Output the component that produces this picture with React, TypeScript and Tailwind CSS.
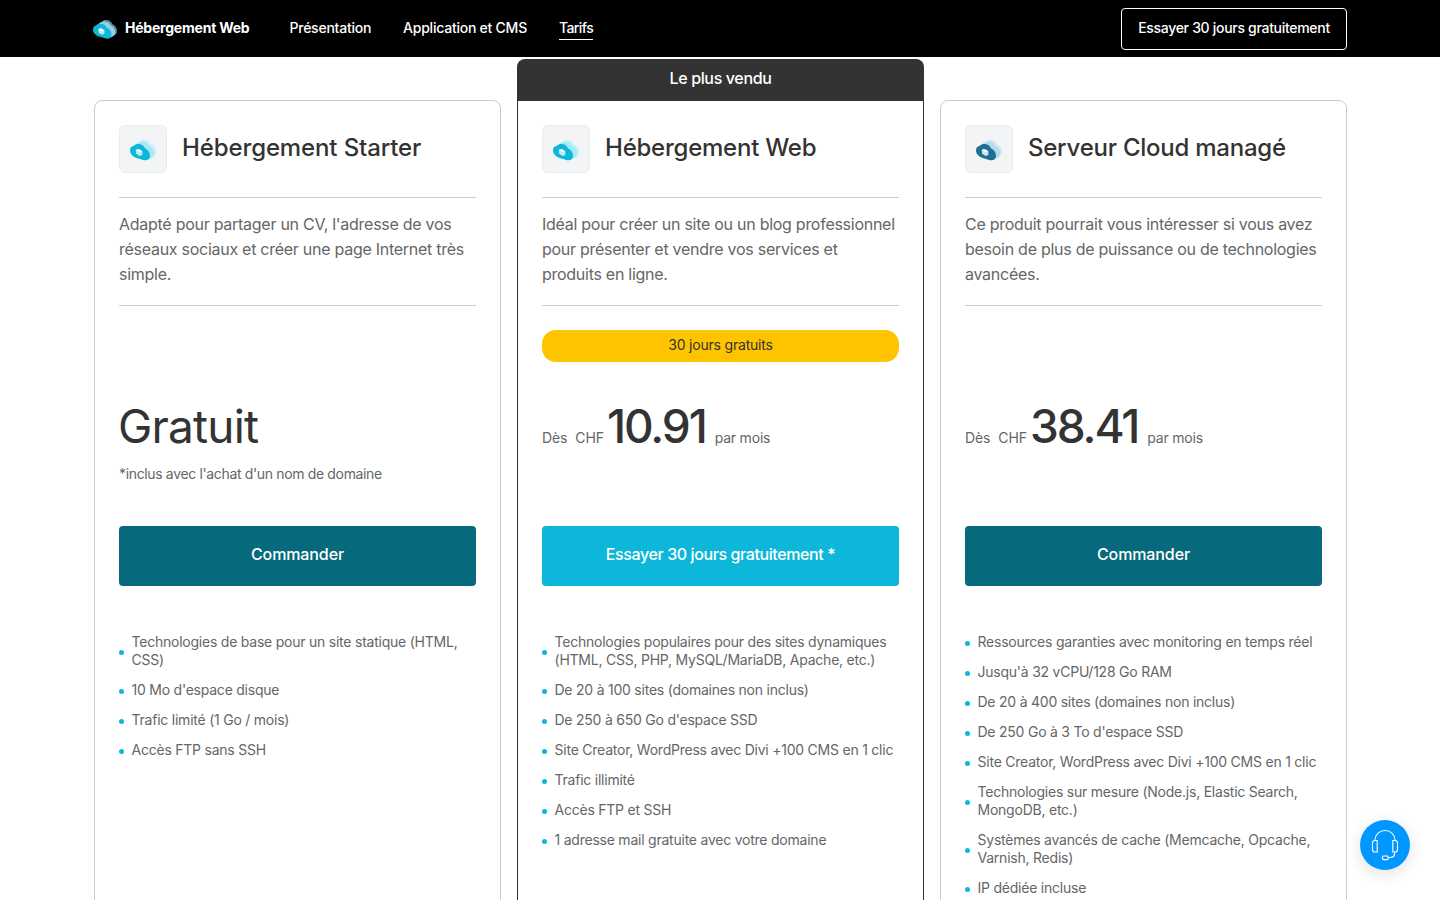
import React from 'react';
import clsx from 'clsx';

type CloudTone = 'cyan' | 'navy' | 'header';

type Plan = {
  name: string;
  nameClass: string;
  tone: CloudTone;
  description: string[];
  featured?: boolean;
  badge?: string;
  price?: string;
  note?: string;
  cta: string;
  features: string[][];
};

const CLOUD_COLORS: Record<CloudTone, [string, string, string]> = {
  cyan: ['#c5f1f9', '#a2ebf7', '#0db7d9'],
  navy: ['#cde8f3', '#b2dbed', '#1f6f91'],
  header: ['#5d8d98', '#8fd3e3', '#0fb8d9'],
};

const plans: Plan[] = [
  {
    name: 'Hébergement Starter',
    nameClass: 'tracking-[-0.12px]',
    tone: 'cyan',
    description: ["Adapté pour partager un CV, l'adresse de vos", 'réseaux sociaux et créer une page Internet très', 'simple.'],
    note: "*inclus avec l'achat d'un nom de domaine",
    cta: 'Commander',
    features: [
      ['Technologies de base pour un site statique (HTML,', 'CSS)'],
      ["10 Mo d'espace disque"],
      ['Trafic limité (1 Go / mois)'],
      ['Accès FTP sans SSH'],
    ],
  },
  {
    name: 'Hébergement Web',
    nameClass: 'tracking-[-0.24px]',
    tone: 'cyan',
    description: ['Idéal pour créer un site ou un blog professionnel', 'pour présenter et vendre vos services et', 'produits en ligne.'],
    featured: true,
    badge: '30 jours gratuits',
    price: '10.91',
    cta: 'Essayer 30 jours gratuitement *',
    features: [
      ['Technologies populaires pour des sites dynamiques', '(HTML, CSS, PHP, MySQL/MariaDB, Apache, etc.)'],
      ['De 20 à 100 sites (domaines non inclus)'],
      ["De 250 à 650 Go d'espace SSD"],
      ['Site Creator, WordPress avec Divi +100 CMS en 1 clic'],
      ['Trafic illimité'],
      ['Accès FTP et SSH'],
      ['1 adresse mail gratuite avec votre domaine'],
    ],
  },
  {
    name: 'Serveur Cloud managé',
    nameClass: 'tracking-[-0.24px]',
    tone: 'navy',
    description: ['Ce produit pourrait vous intéresser si vous avez', 'besoin de plus de puissance ou de technologies', 'avancées.'],
    price: '38.41',
    cta: 'Commander',
    features: [
      ['Ressources garanties avec monitoring en temps réel'],
      ["Jusqu'à 32 vCPU/128 Go RAM"],
      ['De 20 à 400 sites (domaines non inclus)'],
      ["De 250 Go à 3 To d'espace SSD"],
      ['Site Creator, WordPress avec Divi +100 CMS en 1 clic'],
      ['Technologies sur mesure (Node.js, Elastic Search,', 'MongoDB, etc.)'],
      ['Systèmes avancés de cache (Memcache, Opcache,', 'Varnish, Redis)'],
      ['IP dédiée incluse'],
    ],
  },
];

const CLOUD = 'M0 10.2C0 7.6 1.8 5.9 4 5.7C5.4 4.4 7 3.9 9.1 4.1C11.9 4.4 13.9 5.8 14.8 8.2C17.8 9.4 20 12.6 20 15.8C20 18.4 18.6 20.2 16 20.2C13.6 20.2 11 19.2 8.4 18.4C3.4 17.2 0 14.4 0 10.2Z';

const CloudIcon: React.FC<{ tone: CloudTone; className: string }> = ({ tone, className }) => {
  const [back, middle, front] = CLOUD_COLORS[tone];
  return (
    <svg viewBox="0 0 26 21" className={className} fill="none">
      <path d={CLOUD} fill={back} transform="translate(6 -4)" />
      <path d={CLOUD} fill={middle} transform="translate(4.2 -2.4)" />
      <path d={CLOUD} fill={middle} transform="translate(2.2 -1.2)" />
      <path d={CLOUD} fill={front} />
      <path d="M5.8 9.4L8.8 8.9L12.4 11.2V15L9.4 16L6 13.6Z" fill="#bdebf4" />
      <path d="M6 10L8.8 9.2L12.2 11.3L9.5 12.2Z" fill="white" />
    </svg>
  );
};

const Header: React.FC = () => (
  <header className="h-[57px] bg-black text-white text-sm font-medium pl-[93px] pr-[93px] flex items-center">
    <div className="flex items-center gap-2">
      <CloudIcon tone="header" className="w-6 h-[19.4px] mt-0.5" />
      <span className="font-bold tracking-[-0.22px]">Hébergement Web</span>
    </div>
    <nav className="flex items-center gap-8 ml-10 pb-0.5 tracking-[-0.24px]">
      <a>Présentation</a>
      <a>Application et CMS</a>
      <a className="h-[22px] mt-0.5 border-b border-white tracking-[-0.6px]">Tarifs</a>
    </nav>
    <button className="ml-auto w-[226px] h-[42px] pb-0.5 border border-white rounded tracking-[-0.3px]">
      Essayer 30 jours gratuitement
    </button>
  </header>
);

const PlanCard: React.FC<{ plan: Plan }> = ({ plan }) => (
  <div className={clsx('w-[407px]', !plan.featured && 'pt-[41px]')}>
    {plan.featured && (
      <div className="h-[41px] pb-[3px] rounded-t-lg bg-[#333] text-white font-medium tracking-[-0.35px] flex items-center justify-center">
        Le plus vendu
      </div>
    )}
    <section className={clsx('h-[900px] border px-6 pt-6', plan.featured ? 'border-[#333]' : 'border-[#ccc] rounded-lg')}>
      <div className="flex items-center gap-[15px]">
        <div className="w-12 h-12 rounded-md border border-[#e8ebef] bg-[#f2f4f6] flex items-center justify-center">
          <CloudIcon tone={plan.tone} className="w-[26px] h-[21px] mt-0.5" />
        </div>
        <h2 className={clsx('text-2xl font-medium text-[#333] -mt-0.5', plan.nameClass)}>{plan.name}</h2>
      </div>

      <div className="mt-6 h-[109px] border-y border-[#ccc] pt-3.5 text-base leading-[25px] text-[#666] tracking-[-0.27px]">
        {plan.description.map(line => (
          <p key={line} className="whitespace-nowrap">{line}</p>
        ))}
      </div>

      <div className="h-[56px] pt-6">
        {plan.badge && (
          <div className="h-8 rounded-[14px] bg-[#ffc400] text-sm text-[#333] tracking-[-0.2px] flex items-center justify-center pb-0.5">{plan.badge}</div>
        )}
      </div>

      <div className="h-[164px] pt-[34px] text-sm text-[#666] tracking-[-0.1px]">
        {plan.price ? (
          <div className="flex items-baseline whitespace-nowrap">
            <span>Dès</span>
            <span className="ml-2">CHF</span>
            <span className="ml-[3px] text-[46px] leading-[60px] font-medium text-[#333] tracking-[-2.1px]">{plan.price}</span>
            <span className="ml-[9px] tracking-[-0.2px]">par mois</span>
          </div>
        ) : (
          <div className="text-[46px] leading-[60px] text-[#333] -ml-px tracking-[-0.8px]">Gratuit</div>
        )}
        {plan.note && <p className="mt-2 tracking-[-0.35px]">{plan.note}</p>}
      </div>

      <button
        className={clsx(
          'w-full h-[60px] pb-1 rounded text-base font-medium text-white',
          plan.featured ? 'bg-[#0db7d9] tracking-[-0.4px]' : 'bg-[#076a7c] tracking-[-0.1px]'
        )}
      >
        {plan.cta}
      </button>

      <ul className="mt-[47px] space-y-3 text-sm leading-[18px] text-[#666] tracking-[-0.23px]">
        {plan.features.map(lines => (
          <li key={lines[0]} className="flex items-center gap-[7.5px]">
            <span className="shrink-0 w-[5px] h-[5px] mt-[3px] rounded-full bg-[#0db7d9]" />
            <div className="whitespace-nowrap">
              {lines.map(line => (
                <p key={line}>{line}</p>
              ))}
            </div>
          </li>
        ))}
      </ul>
    </section>
  </div>
);

const SupportButton: React.FC = () => (
  <button className="fixed right-[30px] bottom-[30px] w-[50px] h-[50px] rounded-full bg-[#0098ff] shadow-[0_4px_16px_rgba(0,0,0,0.12)]">
    <svg viewBox="0 0 50 50" className="w-full h-full" fill="none" stroke="white" strokeWidth="1.1">
      <path d="M14.8 20.5C15.3 14.2 19.6 10.5 25 10.5S34.7 14.2 35.2 20.5" />
      <path d="M17.2 20.5H15C13.4 20.5 12.5 21.5 12.5 23V29.4C12.5 31 13.4 32 15 32H17.2Z" />
      <path d="M32.8 20.5H35C36.6 20.5 37.5 21.5 37.5 23V29.4C37.5 31 36.6 32 35 32H32.8Z" />
      <path d="M34.6 32V33.5C34.6 36.4 33 37.8 28 37.8" />
      <rect x="22.5" y="36" width="5.6" height="3.6" rx="1" />
    </svg>
  </button>
);

export default function App() {
  return (
    <div className="w-[1440px] h-[900px] overflow-hidden bg-white font-['Inter',sans-serif]">
      <Header />
      <main className="mt-0.5 ml-[94px] flex gap-4">
        {plans.map(plan => (
          <PlanCard key={plan.name} plan={plan} />
        ))}
      </main>
      <SupportButton />
    </div>
  );
}
